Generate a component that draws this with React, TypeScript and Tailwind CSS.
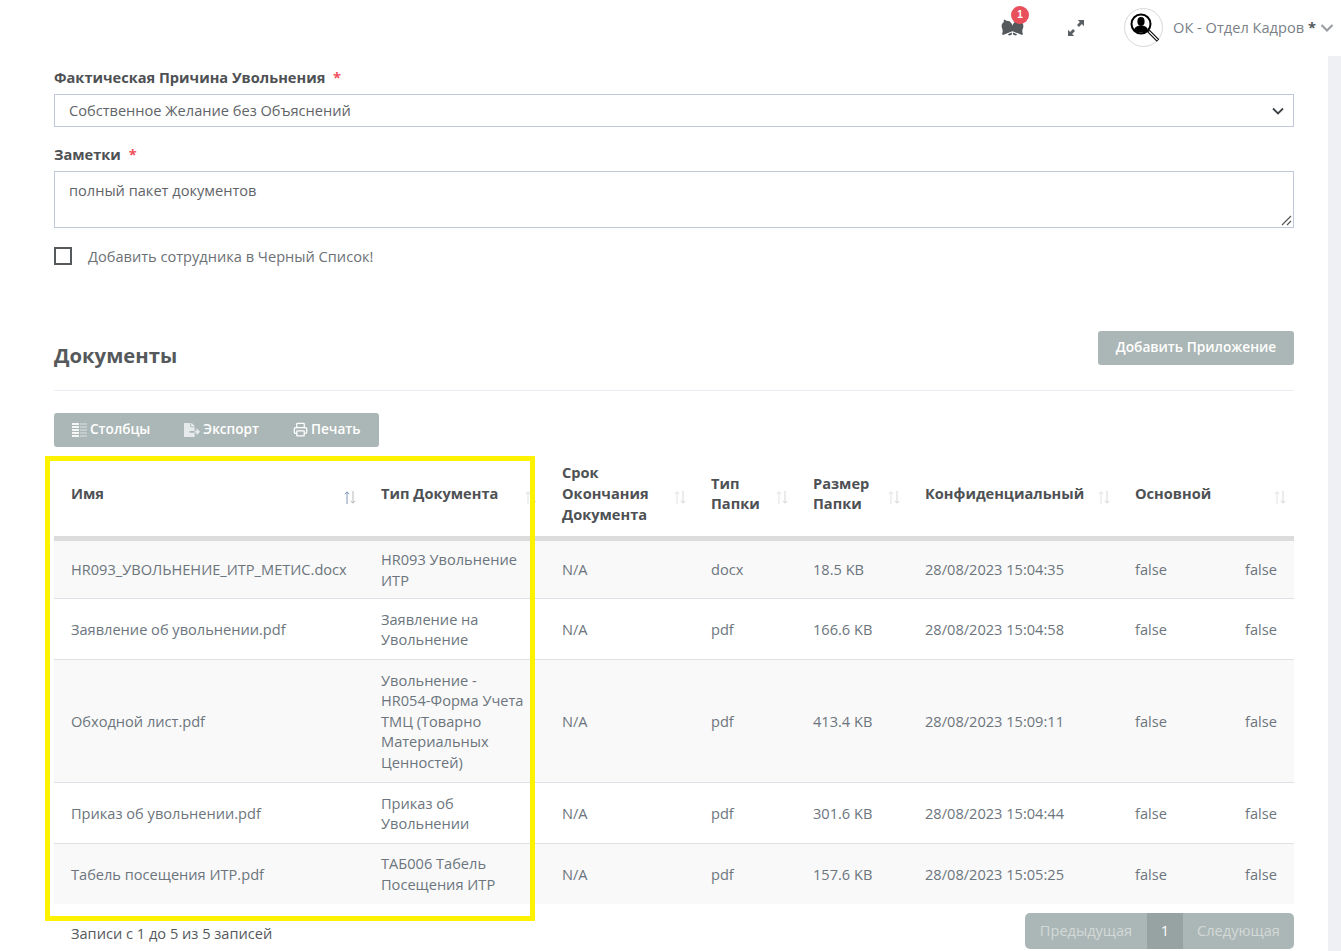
import React from "react";
import { FaBell, FaFileExport } from "react-icons/fa";
import { LuPrinter } from "react-icons/lu";

function Sort({ active = false }: { active?: boolean }) {
  return (
    <svg width="14" height="15" viewBox="0 0 14 15" className="shrink-0">
      <path d="M4 14V2M1.800 4.200 4 1.800l2.200 2.400" fill="none" stroke={active ? "#7f97b8" : "#dfe1e3"} strokeWidth="1" />
      <path d="M10 1v12M7.800 10.800 10 13.200l2.200-2.400" fill="none" stroke={active ? "#b5b9bc" : "#d5d7d9"} strokeWidth="1" />
    </svg>
  );
}

function Star() {
  return <span className="ml-1 text-[#f1505c]">*</span>;
}

function ColumnsIcon() {
  return (
    <svg width="15" height="14" viewBox="0 0 15 14" className="shrink-0">
      {[0, 3, 6, 9, 12].map((y) => (
        <g key={y}>
          <rect x="0" y={y} width="7" height="2" fill="#f4f6f6" />
          <rect x="8" y={y} width="7" height="2" fill="#c3cdcc" />
        </g>
      ))}
    </svg>
  );
}

function Avatar() {
  return (
    <div className="flex h-[39px] w-[39px] items-center justify-center rounded-full border border-[#d8d8d8] bg-white">
      <svg width="32" height="32" viewBox="0 0 32 32">
        <circle cx="13" cy="12" r="9.500" fill="#fff" stroke="#000" strokeWidth="2" />
        <ellipse cx="13" cy="9.500" rx="3.600" ry="4.400" fill="#000" />
        <path d="M6 18c1-3.500 4-4.500 7-4.500s6 1 7 4.500c-2 1.800-4.500 2.500-7 2.500S8 19.800 6 18z" fill="#000" />
        <path d="M20.500 19 30 28.500" stroke="#000" strokeWidth="3.400" />
        <path d="M21 19.500 29.500 28" stroke="#fff" strokeWidth="1.200" />
      </svg>
    </div>
  );
}

const rows = [
  { name: "HR093_УВОЛЬНЕНИЕ_ИТР_МЕТИС.docx", type: "HR093 Увольнение ИТР", folder: "docx", size: "18.5 KB", date: "28/08/2023 15:04:35", h: "h-[60px]" },
  { name: "Заявление об увольнении.pdf", type: "Заявление на Увольнение", folder: "pdf", size: "166.6 KB", date: "28/08/2023 15:04:58", h: "h-[61px]" },
  { name: "Обходной лист.pdf", type: "Увольнение - HR054-Форма Учета ТМЦ (Товарно Материальных Ценностей)", folder: "pdf", size: "413.4 KB", date: "28/08/2023 15:09:11", h: "h-[123px]" },
  { name: "Приказ об увольнении.pdf", type: "Приказ об Увольнении", folder: "pdf", size: "301.6 KB", date: "28/08/2023 15:04:44", h: "h-[61px]" },
  { name: "Табель посещения ИТР.pdf", type: "ТАБ006 Табель Посещения ИТР", folder: "pdf", size: "157.6 KB", date: "28/08/2023 15:05:25", h: "h-[60px]" },
];

const headers = [
  { label: "Имя", active: true },
  { label: "Тип Документа" },
  { label: "Срок Окончания Документа" },
  { label: "Тип Папки" },
  { label: "Размер Папки" },
  { label: "Конфиденциальный" },
];

export default function App() {
  return (
    <div className="relative h-[951px] w-full overflow-hidden bg-white font-['Open_Sans',sans-serif] text-[14.6px] leading-[20.6px] text-[#6c757d]">
      <header className="flex h-[56px] items-start justify-end">
        <div className="relative mr-[39px] mt-[18px] flex h-[20px] w-[28px] items-center text-[#55595c]">
          <FaBell className="absolute left-[-1px] top-[1px] -rotate-[22deg]" size={17} />
          <FaBell className="absolute left-[9px] top-[1px] rotate-[22deg]" size={17} />
          <span className="absolute left-[11px] top-[-12px] flex h-[18px] w-[18px] items-center justify-center rounded-full bg-[#e8505b] font-['Liberation_Sans',sans-serif] text-[10px] font-bold text-white">1</span>
        </div>
        <svg width="18" height="18" viewBox="0 0 18 18" className="mr-[39px] mt-[19px]">
          <path d="M17 1h-6.200l2.100 2.100-2.900 2.900 2 2 2.900-2.900L17 7.200z" fill="#5a5f63" />
          <path d="M1 17h6.200l-2.100-2.100 2.900-2.900-2-2-2.900 2.900L1 10.800z" fill="#5a5f63" />
        </svg>
        <div className="mt-[8px] flex items-center">
          <Avatar />
          <span className="ml-[10px] text-[#7a8187]">ОК - Отдел Кадров</span>
          <span className="ml-[4px] font-bold text-[#55595c]">*</span>
          <svg width="14" height="10" viewBox="0 0 14 10" className="ml-[4px] mr-[7px]">
            <path d="M1.500 2 7 7.500 12.500 2" fill="none" stroke="#9a9ea2" strokeWidth="2.200" />
          </svg>
        </div>
      </header>

      <div className="flex">
        <main className="w-[1328px] pl-[54px] pr-[34px]">
          <label className="mt-[11px] block font-bold leading-[21px] text-[#4e5154]">
            Фактическая Причина Увольнения <Star />
          </label>
          <div className="mt-[6px] flex h-[33px] items-center justify-between border border-[#bfc9d9] pl-[14px] pr-[8px] text-[#5f6468]">
            <span>Собственное Желание без Объяснений</span>
            <svg width="14" height="10" viewBox="0 0 14 10">
              <path d="M2 2.500 7 7.500 12 2.500" fill="none" stroke="#3d4246" strokeWidth="1.800" />
            </svg>
          </div>

          <label className="mt-[17px] block font-bold leading-[21px] text-[#4e5154]">
            Заметки <Star />
          </label>
          <div className="relative mt-[6px] h-[57px] border border-[#bfc9d9] pl-[14px] pt-[8px] text-[#5f6468]">
            полный пакет документов
            <svg width="12" height="12" viewBox="0 0 12 12" className="absolute bottom-[1px] right-[1px]">
              <path d="M11 2 2 11M11 7 7 11" stroke="#555" strokeWidth="1.200" />
            </svg>
          </div>

          <div className="mt-[18px] flex items-center">
            <span className="h-[18px] w-[18px] border-2 border-[#55595c]" />
            <span className="ml-[16px] text-[#6c7176]">Добавить сотрудника в Черный Список!</span>
          </div>

          <div className="mt-[64px] flex h-[60px] items-start justify-between border-b border-[#ebedf2]">
            <h2 className="mt-[9px] text-[20.300px] font-bold leading-[30px] text-[#55595c]">Документы</h2>
            <button className="h-[34px] w-[196px] rounded-[3px] bg-[#abb7b6] text-[13.700px] font-semibold text-white">Добавить Приложение</button>
          </div>

          <div className="mt-[22px] flex h-[34px] w-[325px] items-center rounded-[3px] bg-[#abb7b6] pl-[18px] text-[13.600px] font-semibold text-white">
            <span className="flex items-center gap-[3px]"><ColumnsIcon />Столбцы</span>
            <span className="ml-[34px] flex items-center gap-[3px]"><FaFileExport size={16} className="text-[#e6eaea]" />Экспорт</span>
            <span className="ml-[34px] flex items-center gap-[3px]"><LuPrinter size={15} />Печать</span>
          </div>

          <table className="mt-[10px] w-[1240px] table-fixed border-collapse">
            <colgroup>
              <col className="w-[310px]" />
              <col className="w-[181px]" />
              <col className="w-[149px]" />
              <col className="w-[102px]" />
              <col className="w-[112px]" />
              <col className="w-[210px]" />
              <col className="w-[110px]" />
              <col className="w-[66px]" />
            </colgroup>
            <thead>
              <tr className="h-[82px] border-b-[5px] border-[#dcdcdc] text-left text-[#4e5154]">
                {headers.map((h) => (
                  <th key={h.label} className="pb-[6px] pl-[17px] pr-[5px] font-bold">
                    <div className="flex items-center justify-between">
                      <span className="pr-[8px]">{h.label}</span>
                      <span className="pr-[2px] pt-[8px]"><Sort active={h.active} /></span>
                    </div>
                  </th>
                ))}
                <th colSpan={2} className="pb-[6px] pl-[17px] pr-[7px] font-bold">
                  <div className="flex items-center justify-between">
                    <span>Основной</span>
                    <span className="pt-[8px]"><Sort /></span>
                  </div>
                </th>
              </tr>
            </thead>
            <tbody>
              {rows.map((r, i) => (
                <tr key={r.name} className={`${r.h} border-b border-[#dee2e6] last:border-b-0 ${i % 2 === 0 ? "bg-[#f9f9f9]" : "bg-white"}`}>
                  <td className="whitespace-nowrap pl-[17px] pr-[8px]">{r.name}</td>
                  <td className="pl-[17px] pr-[20px]">{r.type}</td>
                  <td className="pl-[17px]">N/A</td>
                  <td className="pl-[17px]">{r.folder}</td>
                  <td className="pl-[17px]">{r.size}</td>
                  <td className="pl-[17px]">{r.date}</td>
                  <td className="pl-[17px]">false</td>
                  <td className="pl-[17px]">false</td>
                </tr>
              ))}
            </tbody>
          </table>

          <div className="mt-[9px] flex items-start justify-between">
            <span className="ml-[17px] mt-[10px] text-[#55595c]">Записи с 1 до 5 из 5 записей</span>
            <div className="flex h-[36px] w-[269px] items-stretch overflow-hidden rounded-[5px] bg-[#abb7b6] text-[#d3d9d8]">
              <span className="flex w-[122px] items-center justify-center">Предыдущая</span>
              <span className="flex w-[36px] items-center justify-center border border-[#96a3a2] bg-[#96a3a2] text-white">1</span>
              <span className="flex w-[111px] items-center justify-center">Следующая</span>
            </div>
          </div>
        </main>
        <aside className="h-[895px] w-[13px] bg-[#eff0f3]" />
      </div>

      <div className="pointer-events-none absolute left-[45px] top-[456px] h-[465px] w-[490px] border-[5px] border-[#fff200]" />
    </div>
  );
}
